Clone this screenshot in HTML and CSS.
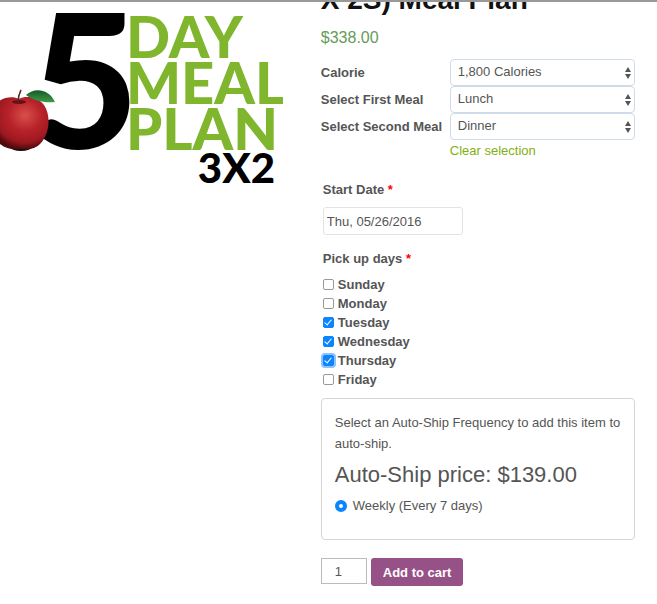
FILE: index.html
```
<!DOCTYPE html>
<html lang="en">
  <head>
    <meta charset="utf-8">
    <title>5 Day Meal Plan</title>
    <link rel="stylesheet" href="styles.css">
  </head>
  <body>
    <main class="product">
      <div class="product-image">
        <svg viewBox="0 0 283 190" role="img" aria-label="5 Day Meal Plan 3X2">
          <defs>
            <radialGradient id="apple" cx="0.58" cy="0.35" r="0.65">
              <stop offset="0" stop-color="#d8504a"/>
              <stop offset="0.45" stop-color="#b8232a"/>
              <stop offset="0.8" stop-color="#9c1820"/>
              <stop offset="1" stop-color="#4f0a0c"/>
            </radialGradient>
            <linearGradient id="leaf" x1="0" y1="0" x2="0" y2="1">
              <stop offset="0" stop-color="#145c2c"/>
              <stop offset="1" stop-color="#3f9a45"/>
            </linearGradient>
          </defs>
          <text class="logo-five" x="30" y="147">5</text>
          <g class="logo-words">
            <text x="126" y="56">DAY</text>
            <text x="126" y="102">MEAL</text>
            <text x="126" y="148">PLAN</text>
          </g>
          <text class="logo-size" x="198" y="181">3X2</text>
          <!-- apple -->
          <ellipse cx="21" cy="145" rx="11" ry="4" fill="#111"/>
          <path d="M19 97C26 93 38 95 44 103C51 113 50 131 41 141C36 147 28 148 21 147C13 148 6 147 0 142C-10 130 -9 110 -2 100C4 95 13 94 19 97Z" fill="url(#apple)"/>
          <ellipse cx="19" cy="100" rx="7" ry="2" fill="#641014"/>
          <path d="M18 101C18 96 19 92 21 88" fill="none" stroke="#4b2b20" stroke-width="1.5"/>
          <path d="M26 93C34 86 48 86 55 100C44 101 34 99 26 93Z" fill="url(#leaf)"/>
        </svg>
      </div>

      <form class="summary">
        <h1>X 2S) Meal Plan</h1>
        <p class="price">$338.00</p>

        <div class="variations">
          <label for="calorie">Calorie</label>
          <div class="select-box">
            <select id="calorie"><option>1,800 Calories</option></select>
            <svg class="arrows" viewBox="0 0 6 12"><path d="M0 5L3 0L6 5ZM0 7L3 12L6 7Z"/></svg>
          </div>
          <label for="first-meal">Select First Meal</label>
          <div class="select-box">
            <select id="first-meal"><option>Lunch</option></select>
            <svg class="arrows" viewBox="0 0 6 12"><path d="M0 5L3 0L6 5ZM0 7L3 12L6 7Z"/></svg>
          </div>
          <label for="second-meal">Select Second Meal</label>
          <div class="select-box">
            <select id="second-meal"><option>Dinner</option></select>
            <svg class="arrows" viewBox="0 0 6 12"><path d="M0 5L3 0L6 5ZM0 7L3 12L6 7Z"/></svg>
          </div>
          <a class="clear" href="#">Clear selection</a>
        </div>

        <div class="options">
          <label class="field-label" for="start-date">Start Date <span class="required">*</span></label>
          <input class="date" type="text" id="start-date" value="Thu, 05/26/2016">

          <fieldset class="days">
            <legend class="field-label">Pick up days <span class="required">*</span></legend>
            <label><input type="checkbox">Sunday</label>
            <label><input type="checkbox">Monday</label>
            <label><input type="checkbox" checked>Tuesday</label>
            <label><input type="checkbox" checked>Wednesday</label>
            <label><input class="focused" type="checkbox" checked>Thursday</label>
            <label><input type="checkbox">Friday</label>
          </fieldset>
        </div>

        <div class="autoship">
          <p>Select an Auto-Ship Frequency to add this item to auto-ship.</p>
          <h2>Auto-Ship price: $139.00</h2>
          <label><input type="radio" name="frequency" checked>Weekly (Every 7 days)</label>
        </div>

        <div class="cart">
          <input class="qty" type="text" value="1" aria-label="Quantity">
          <button type="button">Add to cart</button>
        </div>
      </form>
    </main>
  </body>
</html>
```

FILE: styles.css
```
* {
  box-sizing: border-box;
}
body {
  margin: 0;
  font-family: "Liberation Sans", Arial, sans-serif;
  font-size: 13px;
  color: #555;
  background: #fff;
}
.product {
  display: grid;
  grid-template-columns: 9fr 10fr;
  column-gap: 38px;
  padding-right: 22px;
  overflow: hidden;
  border-top: 2px solid #999;
}

/* Product picture */
.product-image svg {
  display: block;
  width: 100%;
}
.logo-five {
  font: 900 188px Lato, sans-serif;
}
.logo-words {
  font: 900 58px Lato, sans-serif;
  fill: #80b52e;
}
.logo-size {
  font: 900 42px Lato, sans-serif;
}

/* Title and price */
h1 {
  margin: -18px 0 0;
  font-size: 28px;
  line-height: 32px;
  color: #111;
}
.price {
  margin: 12px 0 11px;
  font-size: 16px;
  line-height: 20px;
  color: #659b57;
}

/* Meal selects */
.variations {
  display: grid;
  grid-template-columns: 129px 1fr;
}
.variations label {
  line-height: 27px;
  font-weight: bold;
}
.select-box {
  position: relative;
}
select {
  display: block;
  appearance: none;
  width: 100%;
  height: 27px;
  padding: 0 20px 2px 7px;
  font: inherit;
  color: #555;
  background: #fff;
  border: 1px solid #cddce8;
  border-radius: 4px;
}
.arrows {
  position: absolute;
  top: 8px;
  right: 4px;
  width: 6px;
  height: 12px;
  fill: #555;
  pointer-events: none;
}
.clear {
  grid-column: 2;
  line-height: 22px;
  color: #82b010;
  text-decoration: none;
}

/* Start date and pick up days */
.options {
  padding: 19px 2px 0;
}
.field-label {
  display: block;
  padding: 0;
  line-height: 18px;
  font-weight: bold;
}
.required {
  color: #f00;
}
.date {
  display: block;
  width: 140px;
  height: 28px;
  margin: 8px 0 15px;
  padding: 0 3px;
  font: inherit;
  color: #555;
  border: 1px solid #e3e3e3;
  border-radius: 3px;
}
.days {
  margin: 0;
  padding: 0;
  border: 0;
}
.days .field-label {
  margin-bottom: 7px;
}
.days label {
  display: flex;
  align-items: center;
  gap: 4px;
  height: 19px;
  font-weight: bold;
}
.days input {
  appearance: none;
  display: grid;
  place-items: center;
  width: 11px;
  height: 11px;
  margin: 0;
  border: 1px solid #999;
  border-radius: 2px;
  background: #fff;
}
.days input:checked {
  border-color: #0a84ff;
  background: #0a84ff;
}
.days input:checked::after {
  content: "";
  width: 3px;
  height: 6px;
  margin-bottom: 2px;
  border: solid #fff;
  border-width: 0 1px 1px 0;
  transform: rotate(40deg);
}
.days .focused {
  box-shadow: 0 0 0 2px #8dc2fb;
}

/* Auto-ship box */
.autoship {
  margin-top: 9px;
  padding: 13px 4px 24px 13px;
  border: 1px solid #d6d6d6;
  border-radius: 4px;
}
.autoship p {
  margin: 0;
  line-height: 21px;
}
.autoship h2 {
  margin: 8px 0 9px;
  font-size: 22px;
  font-weight: normal;
  line-height: 26px;
}
.autoship label {
  display: flex;
  align-items: center;
  gap: 6px;
  line-height: 18px;
}
.autoship input {
  appearance: none;
  width: 12px;
  height: 12px;
  margin: 0;
  border: 4px solid #0a84ff;
  border-radius: 50%;
  background: #fff;
}

/* Quantity and button */
.cart {
  display: flex;
  align-items: flex-start;
  gap: 4px;
  padding: 18px 0;
}
.qty {
  width: 46px;
  height: 26px;
  padding: 0 13px;
  font: inherit;
  color: #555;
  border: 1px solid #bbb;
}
.cart button {
  height: 28px;
  padding: 0 12px;
  font: bold 13px "Liberation Sans", Arial, sans-serif;
  color: #fff;
  background: #965187;
  border: 0;
  border-radius: 3px;
  cursor: pointer;
}
```
